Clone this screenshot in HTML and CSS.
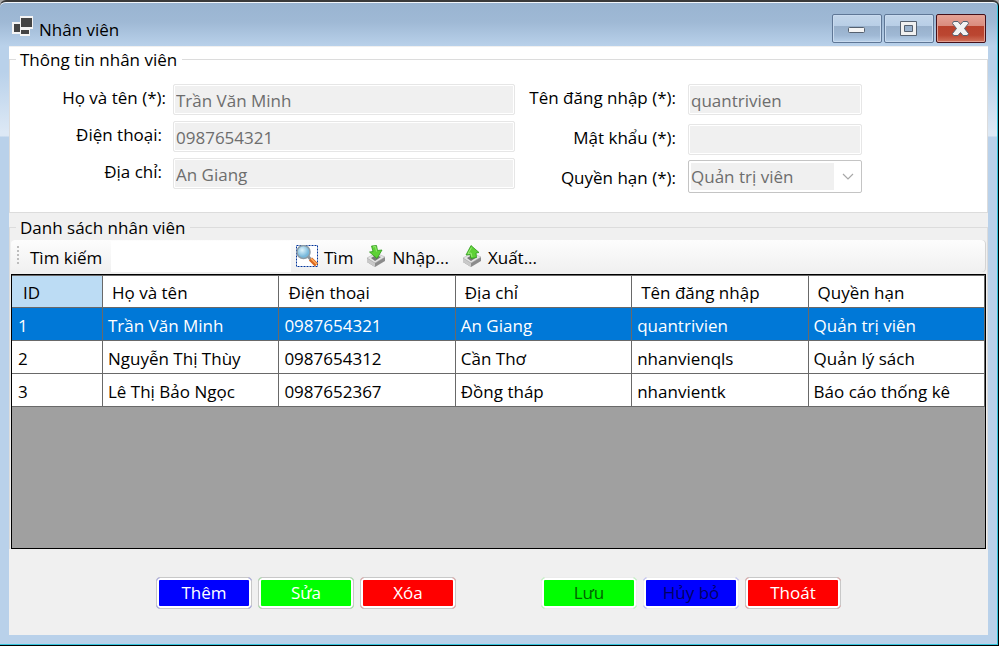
FILE: index.html
```html
<!DOCTYPE html>
<html lang="vi">
<head>
<meta charset="utf-8">
<meta name="viewport" content="width=device-width, initial-scale=1">
<title>Nhân viên</title>
<link rel="stylesheet" href="styles.css">
</head>
<body>
<div class="window">
  <header class="titlebar">
    <svg class="app-icon" width="22" height="20" viewBox="0 0 22 20" aria-hidden="true">
      <path fill="#f4f4f4" d="M8 0h13v13h-3v7H8v-2H0V6h8z"/>
      <path fill="#444" d="M9 2h11v9H9zM2 8h6v8H2zM9 14h8v4H9z"/>
    </svg>
    <h1 class="title">Nhân viên</h1>
    <div class="controls">
      <button type="button" class="control" aria-label="Thu nhỏ">
        <svg width="18" height="16" viewBox="0 0 18 16"><rect x=".5" y="6.500" width="16" height="5" rx="1" fill="#f4f4f4" stroke="#55606f"/></svg>
      </button>
      <button type="button" class="control" aria-label="Phóng to">
        <svg width="18" height="16" viewBox="0 0 18 16"><path fill="#f0f0f0" fill-rule="evenodd" stroke="#55606f" d="M.5.5h16v14H.5zM4.500 4.500v6h8v-6z"/></svg>
      </button>
      <button type="button" class="control control-close" aria-label="Đóng">
        <svg width="18" height="16" viewBox="0 0 18 16"><path fill="#f2f2f2" stroke="#55606f" stroke-linejoin="round" d="M1.500.5H6l2.500 3 2.500-3h4.500l1 2-4 5 4 5-1 2H11l-2.500-3-2.500 3H1.500l-1-2 4-5-4-5z"/></svg>
      </button>
    </div>
  </header>

  <main class="client">
    <fieldset class="group group-info">
      <legend>Thông tin nhân viên</legend>
      <div class="fields">
        <div class="column column-left">
          <label for="name">Họ và tên (*):</label>
          <input id="name" type="text" value="Trần Văn Minh" disabled>
          <label class="inset" for="phone">Điện thoại:</label>
          <input id="phone" type="text" value="0987654321" disabled>
          <label class="inset" for="address">Địa chỉ:</label>
          <input id="address" type="text" value="An Giang" disabled>
        </div>
        <div class="column column-right">
          <label for="user">Tên đăng nhập (*):</label>
          <input id="user" type="text" value="quantrivien" disabled>
          <label for="password">Mật khẩu (*):</label>
          <input id="password" type="password" disabled>
          <label class="combo-label" for="role">Quyền hạn (*):</label>
          <div class="combo">
            <select id="role" disabled><option>Quản trị viên</option></select>
            <svg class="chevron" width="12" height="8" viewBox="0 0 12 8" aria-hidden="true"><path d="M1 1l5 5 5-5" fill="none" stroke="#a8a8a8" stroke-width="1.200"/></svg>
          </div>
        </div>
      </div>
    </fieldset>

    <fieldset class="group group-list">
      <legend>Danh sách nhân viên</legend>
      <div class="toolbar">
        <span class="grip"></span>
        <label for="search">Tìm kiếm</label>
        <input id="search" type="text">
        <button type="button" class="tool tool-find">
          <svg width="22" height="22" viewBox="0 0 22 22" aria-hidden="true">
            <defs><radialGradient id="lens" cx=".4" cy=".35"><stop offset="0" stop-color="#dff4fc"/><stop offset="1" stop-color="#78b9dc"/></radialGradient></defs>
            <path fill="#fff" d="M0 0h22v22H0z"/>
            <rect x=".5" y=".5" width="21" height="21" fill="none" stroke="#003399" stroke-dasharray="2 1"/>
            <path d="M11.500 11l4 4" stroke="#8a9299" stroke-width="3"/>
            <path d="M14.500 14l6 6" stroke="#d9661f" stroke-width="4.500"/>
            <path d="M15 13.500l6 6" stroke="#ffad5c" stroke-width="1.500"/>
            <circle cx="7.500" cy="7" r="6.500" fill="url(#lens)" stroke="#8c9ba6" stroke-width="1.500"/>
          </svg>
          <span>Tìm</span>
        </button>
        <button type="button" class="tool tool-import">
          <svg width="20" height="22" viewBox="0 0 20 22" aria-hidden="true">
            <path fill="#8b8b8b" d="M1 13v4l8 5 10-6v-4z"/>
            <path fill="#c9c9c9" d="M1 13v4l8 5v-4z"/>
            <path fill="#e4e4e4" stroke="#aaa" stroke-width=".5" d="M1 13l9-5 9 4-10 6z"/>
            <path fill="#777" d="M5 13l5-3 5 2-6 4z"/>
            <path fill="#5ed136" stroke="#2f9a1c" stroke-width=".8" d="M5.500 1l5-.5 1 5 4.500-.5-5 8.500L3.500 7 7 6.500z"/>
            <path fill="none" stroke="#9bea78" d="M7 2l2.500-.5 1 5"/>
          </svg>
          <span>Nhập...</span>
        </button>
        <button type="button" class="tool tool-export">
          <svg width="20" height="22" viewBox="0 0 20 22" aria-hidden="true">
            <path fill="#8b8b8b" d="M1 13v4l8 5 10-6v-4z"/>
            <path fill="#c9c9c9" d="M1 13v4l8 5v-4z"/>
            <path fill="#e4e4e4" stroke="#aaa" stroke-width=".5" d="M1 13l9-5 9 4-10 6z"/>
            <path fill="#777" d="M5 13l5-3 5 2-6 4z"/>
            <path fill="#5ed136" stroke="#2f9a1c" stroke-width=".8" d="M9 .5L17 7.500l-3 .5.500 4.500-5.500 1-1-4-4 .5z"/>
            <path fill="none" stroke="#9bea78" d="M9.500 2.500L6 8.500l3-.5 1 4"/>
          </svg>
          <span>Xuất...</span>
        </button>
      </div>
      <div class="grid">
        <table>
          <colgroup><col class="col-id"><col><col><col><col><col></colgroup>
          <thead>
            <tr><th class="current">ID</th><th>Họ và tên</th><th>Điện thoại</th><th>Địa chỉ</th><th>Tên đăng nhập</th><th>Quyền hạn</th></tr>
          </thead>
          <tbody>
            <tr class="selected"><td>1</td><td>Trần Văn Minh</td><td>0987654321</td><td>An Giang</td><td>quantrivien</td><td>Quản trị viên</td></tr>
            <tr><td>2</td><td>Nguyễn Thị Thùy</td><td>0987654312</td><td>Cần Thơ</td><td>nhanvienqls</td><td>Quản lý sách</td></tr>
            <tr><td>3</td><td>Lê Thị Bảo Ngọc</td><td>0987652367</td><td>Đồng tháp</td><td>nhanvientk</td><td>Báo cáo thống kê</td></tr>
          </tbody>
        </table>
      </div>
    </fieldset>

    <footer class="actions">
      <div class="action-set">
        <button type="button" class="action blue">Thêm</button>
        <button type="button" class="action green">Sửa</button>
        <button type="button" class="action red">Xóa</button>
      </div>
      <div class="action-set">
        <button type="button" class="action green" disabled>Lưu</button>
        <button type="button" class="action blue" disabled>Hủy bỏ</button>
        <button type="button" class="action red">Thoát</button>
      </div>
    </footer>
  </main>
</div>
</body>
</html>
```
FILE: styles.css
```css
* {
  box-sizing: border-box;
}

body {
  margin: 0;
  background: #a9a9a9;
  color: #000;
  font: 17px/24px "Open Sans", "Noto Sans", sans-serif;
}

button,
input,
select {
  margin: 0;
  font: inherit;
}

.window {
  display: flex;
  flex-direction: column;
  min-height: 100vh;
  padding: 0 10px 10px 9px;
  border: solid #000;
  border-width: 2px 1px 1px 0;
  border-top-color: #3a3a3a;
  border-radius: 6px 6px 0 0;
  background: linear-gradient(#99b4d1 0, #9fb9d5 20px, #b9d1ea 44px, #b9d1ea 70px, #dce8f5 130px, #dce8f5 134px, #b9d1ea 135px);
  box-shadow: inset -1px -1px #35c4dc, inset 0 1px #f2f6fb;
}

.titlebar {
  display: flex;
  align-items: center;
  height: 44px;
  padding: 11px 2px 0 3px;
}

.app-icon {
  margin-bottom: 8px;
}

.title {
  flex: 1;
  margin: 0 0 0 5px;
  font-size: 17px;
  font-weight: 400;
}

.controls {
  display: flex;
  gap: 2px;
  align-self: flex-start;
  margin-top: 1px;
}

.control {
  display: grid;
  place-items: center;
  width: 50px;
  height: 29px;
  padding: 0;
  border: 1px solid #5f7796;
  border-radius: 2px;
  background: linear-gradient(#c3d6ea, #b8cee6 40%, #98b0cb 41%, #9fb8d4 75%, #b9d1ea);
  box-shadow: inset 0 0 0 1px #c9dbef;
}

.control-close {
  border-color: #45101a;
  background: linear-gradient(#e6a397, #d98c7e 40%, #b8412c 41%, #bb4631 75%, #d1735c);
  box-shadow: inset 0 0 0 1px #e2a194;
}

.client {
  display: flex;
  flex: 1;
  flex-direction: column;
  background: #f0f0f0;
}

.group {
  min-width: 0;
  margin: 0;
  padding: 0;
  border: 1px solid #dcdcdc;
}

.group legend {
  margin-left: 6px;
  padding: 2px 5px 0 4px;
  line-height: 24px;
}

.group-info {
  background: #fff;
  box-shadow: 0 -12px #fff;
  margin-bottom: 1px;
}

.fields {
  display: grid;
  grid-template-columns: minmax(0, 505fr) minmax(0, 347fr);
  padding: 12px 125px 19px 0;
}

.column {
  display: grid;
  align-items: start;
}

.column-left {
  grid-template: 37px 37px 35px / 156px minmax(0, 1fr);
  column-gap: 7px;
}

.column-right {
  grid-template: 40px 36px 33px / 161px minmax(0, 1fr);
  column-gap: 12px;
}

.column label {
  padding-top: 2px;
  text-align: right;
}

.column .inset {
  padding-right: 4px;
}

.column .combo-label {
  align-self: center;
}

.column input {
  width: 100%;
  height: 31px;
  padding: 2px 2px 0;
  border: 1px solid #e6e6e6;
  border-radius: 2px;
  background: #f0f0f0;
  box-shadow: inset 0 0 0 1px #fff;
  color: #6d6d6d;
}

.combo {
  display: flex;
  align-items: center;
  height: 33px;
  padding: 2px 7px 2px 2px;
  border: 1px solid #c4c4c4;
  border-radius: 2px;
}

.combo select {
  flex: 1;
  min-width: 0;
  height: 27px;
  margin-right: 8px;
  padding: 0;
  border: 0;
  border-radius: 0;
  appearance: none;
  background: #f0f0f0;
  color: #6d6d6d;
  opacity: 1;
}

.group-list {
  border-bottom: 0;
}

.toolbar {
  display: flex;
  align-items: center;
  height: 32px;
  margin: 0 1px 2px;
  border-radius: 4px;
  background: linear-gradient(#fdfdfd, #f0f0f0);
  box-shadow: inset -1px 0 #d4d4d4;
}

.grip {
  width: 2px;
  height: 20px;
  margin: 0 11px 0 6px;
  background: repeating-linear-gradient(#bdbdbd 0 2px, transparent 2px 4px);
}

.toolbar label {
  width: 81px;
  padding-top: 4px;
}

.toolbar input {
  width: 180px;
  height: 31px;
  padding: 0 3px;
  border: 0;
  background: #fff;
}

.tool {
  display: flex;
  align-items: center;
  gap: 6px;
  padding: 0;
  border: 0;
  background: none;
  color: #000;
}

.tool span {
  padding-top: 4px;
}

.tool-find {
  margin-left: 5px;
}

.tool-import,
.tool-export {
  margin-left: 13px;
}

.grid {
  min-height: calc(100vh - 371px);
  margin: 0 1px;
  border: 1px solid #000;
  background: #a0a0a0;
}

table {
  width: 100%;
  border-spacing: 0;
  border-top: 1px solid #696969;
  table-layout: fixed;
  background: #fff;
}

.col-id {
  width: 91px;
}

th,
td {
  height: 33px;
  padding: 4px 5px 0;
  border: solid #696969;
  border-width: 0 1px 1px 0;
  font-weight: 400;
  text-align: left;
  white-space: nowrap;
}

th {
  height: 32px;
  padding: 2px 9px 0;
}

td:first-child {
  padding-left: 6px;
}

th:first-child {
  padding-left: 11px;
}

.current {
  background: #bcdcf4;
}

.selected {
  background: #0078d7;
  color: #fff;
}

.actions {
  display: flex;
  justify-content: center;
  gap: 85px;
  padding: 28px 0 26px;
}

.action-set {
  display: flex;
  gap: 6px;
}

.action {
  width: 96px;
  height: 32px;
  padding: 0;
  border: 1px solid #c8c8c8;
  border-radius: 4px;
  box-shadow: inset 0 0 0 2px #fff;
  color: #fff;
}

.action:disabled {
  border-color: #ececec;
}

.blue {
  background: #00f;
}

.green {
  background: #0f0;
}

.red {
  background: #f00;
}

.green:disabled {
  color: #006400;
}

.blue:disabled {
  color: #000064;
}
```
